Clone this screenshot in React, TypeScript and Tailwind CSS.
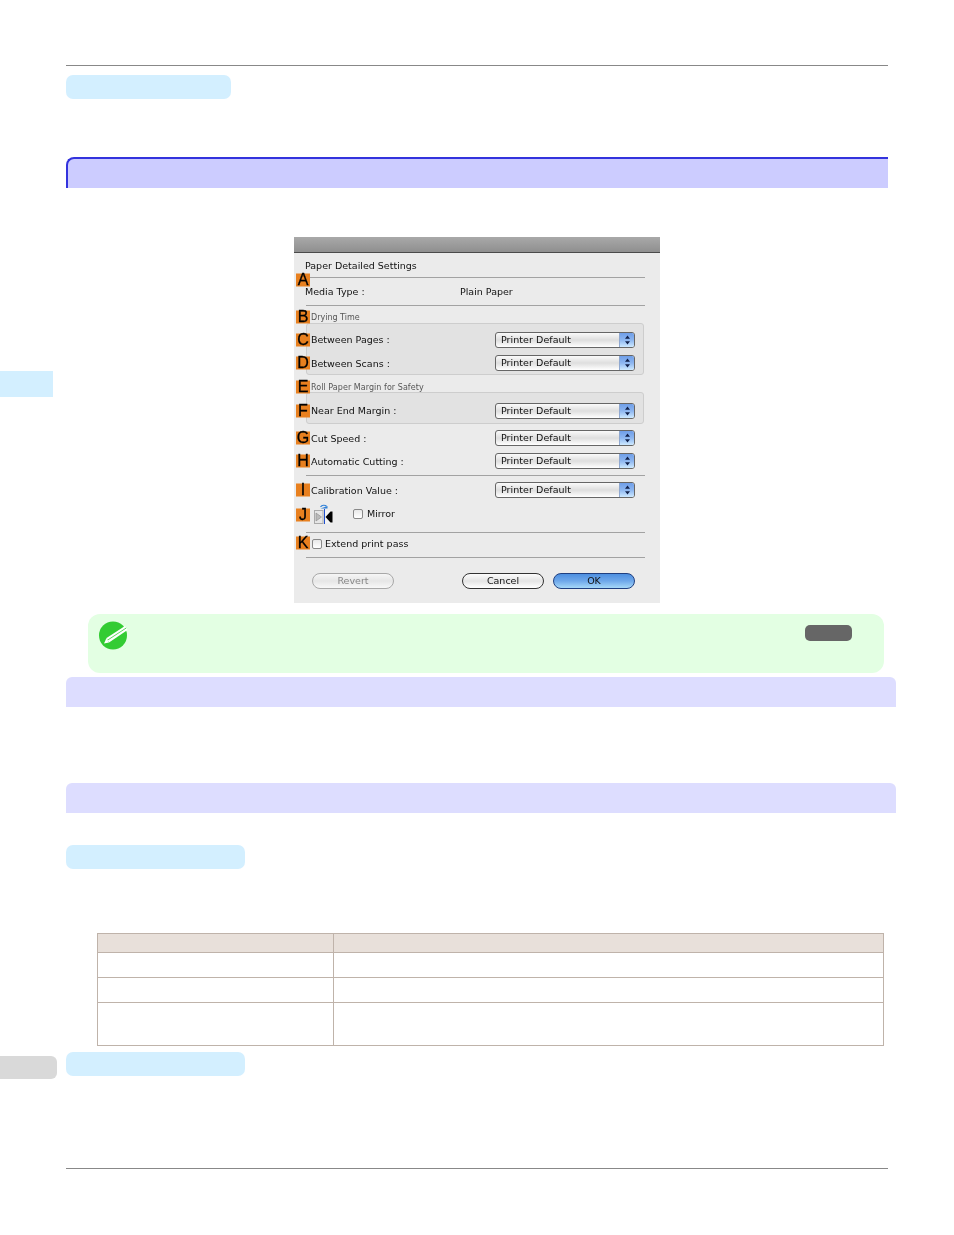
import React from "react";

const font = { fontFamily: '"DejaVu Sans", sans-serif' };

function Badge({ l, cls }: { l: string; cls: string }) {
  return (
    <span
      className={`absolute top-1/2 -translate-y-1/2 w-[14px] h-[13px] bg-[#e8801f] text-black text-[16px] leading-[12px] text-center [-webkit-text-stroke:0.3px_black] font-['Liberation_Sans',sans-serif] ${cls}`}
    >
      {l}
    </span>
  );
}

function Select() {
  return (
    <div className="w-[140px] h-[16px] flex rounded-[3px] border border-[#666] overflow-hidden bg-gradient-to-b from-[#fafafa] via-[#dedede] to-white shrink-0">
      <span className="flex-1 pl-[5px] text-[9.5px] leading-[14px] text-[#111] tracking-[0.05px]">Printer Default</span>
      <span className="w-[15px] flex items-center justify-center bg-gradient-to-b from-[#6f9ee8] via-[#8db6f0] to-[#cfeaff] border-l border-[#8fa8d0]">
        <svg width="7" height="10" viewBox="0 0 7 10">
          <path d="M3.5 0.5 L6 3.8 H1 Z M3.5 9.5 L6 6.2 H1 Z" fill="#10204a" />
        </svg>
      </span>
    </div>
  );
}

function SelectRow({ l, label, badgeCls, className, labelCls = "" }: { l: string; label: string; badgeCls: string; className: string; labelCls?: string }) {
  return (
    <div className={`relative flex items-center justify-between h-[16px] ${className}`}>
      <Badge l={l} cls={badgeCls} />
      <span className={`text-[9.5px] text-[#111] whitespace-nowrap ${labelCls}`}>{label}</span>
      <Select />
    </div>
  );
}

function Line() {
  return <div className="h-px bg-[#a2a2a2]" />;
}

function Check() {
  return <span className="block w-[10px] h-[10px] rounded-[2px] border border-[#888] bg-gradient-to-b from-[#e8e8e8] to-white shrink-0" />;
}

function Dialog() {
  return (
    <div style={font} className="ml-[294px] mt-[49px] w-[366px] h-[366px] bg-[#ebebeb] blur-[0.35px]">
      <div className="h-[16px] bg-gradient-to-b from-[#a9a9a9] to-[#8f8f8f] border-b border-[#4a4a4a]" />
      <div className="ml-[12px] w-[339px]">
        <div className="h-[24px] flex items-center pt-[2px] -ml-px text-[9.5px] text-[#111]">Paper Detailed Settings</div>
        <Line />
        <div className="relative h-[27px] flex items-center pt-[2px] -ml-px text-[9.5px] text-[#111]">
          <Badge l="A" cls="left-[-9px] top-[2px]" />
          <span className="w-[155px]">Media Type :</span>
          <span>Plain Paper</span>
        </div>
        <Line />
        <div className="relative mt-[4px] h-[13px] flex items-center pl-[5px] pt-[3px] text-[8px] text-[#555]">
          <Badge l="B" cls="left-[-10px]" />
          <span>Drying Time</span>
        </div>
        <div className="w-[338px] h-[52px] rounded-[3px] border border-[#cdcdcd] bg-[#e2e2e2] pt-[8px] pl-[4px] pr-[8px] flex flex-col gap-[7px]">
          <SelectRow l="C" label="Between Pages :" badgeCls="left-[-15px]" className="" />
          <SelectRow l="D" label="Between Scans :" badgeCls="left-[-15px]" className="" labelCls="pt-[2px]" />
        </div>
        <div className="relative mt-[6px] h-[11px] flex items-center pl-[5px] pt-[2px] text-[8px] text-[#555] tracking-[0.05px]">
          <Badge l="E" cls="left-[-10px]" />
          <span>Roll Paper Margin for Safety</span>
        </div>
        <div className="w-[338px] h-[32px] rounded-[3px] border border-[#cdcdcd] bg-[#e2e2e2] pt-[10px] pl-[4px] pr-[8px]">
          <SelectRow l="F" label="Near End Margin :" badgeCls="left-[-15px]" className="" />
        </div>
        <SelectRow l="G" label="Cut Speed :" badgeCls="left-[-10px]" className="mt-[6px] pl-[5px] pr-[10px]" labelCls="pt-[2px]" />
        <SelectRow l="H" label="Automatic Cutting :" badgeCls="left-[-10px]" className="mt-[7px] pl-[5px] pr-[10px]" labelCls="pt-[2px]" />
        <div className="mt-[6px]"><Line /></div>
        <SelectRow l="I" label="Calibration Value :" badgeCls="left-[-10px]" className="mt-[6px] pl-[5px] pr-[10px]" labelCls="pt-[2px]" />
        <div className="relative mt-[6px] h-[20px] flex items-center pl-[8px]">
          <Badge l="J" cls="left-[-10px] top-[11px]" />
          <svg width="19" height="20" viewBox="0 0 19 20" className="shrink-0">
            <path d="M6.5 3 C8 0.8 11 0.8 12.5 2.2" fill="none" stroke="#2f80d8" strokeWidth="1.2" />
            <path d="M6.5 4.5 H13.5 V2 Z" fill="#2f80d8" />
            <rect x="0.5" y="6.5" width="8.5" height="13" fill="#e6e6e6" stroke="#aaa" />
            <path d="M2 9 L7.5 13 L2 17 Z" fill="#bbb" stroke="#888" strokeWidth="0.6" />
            <rect x="10" y="5" width="1" height="15" fill="#2050d0" />
            <rect x="11" y="6.5" width="7.5" height="13" fill="#f4f4f4" />
            <path d="M18.5 7.5 V18.5 H16.5 L11.5 13 L16.5 7.5 Z" fill="#000" />
          </svg>
          <span className="ml-[20px]"><Check /></span>
          <span className="ml-[4px] text-[9.5px] text-[#111]">Mirror</span>
        </div>
        <div className="mt-[8px]"><Line /></div>
        <div className="relative h-[24px] flex items-center pl-[6px] pb-[2px]">
          <Badge l="K" cls="left-[-10px] top-[10px]" />
          <Check />
          <span className="ml-[3px] text-[9.5px] text-[#111]">Extend print pass</span>
        </div>
        <Line />
        <div className="mt-[15px] flex items-center pl-[6px] pr-[10px] text-[9.5px]">
          <span className="w-[82px] h-[16px] rounded-full border border-[#a8a8a8] bg-gradient-to-b from-[#f6f6f6] via-[#e6e6e6] to-[#f8f8f8] text-[#888] text-center leading-[14px]">Revert</span>
          <span className="ml-[68px] w-[82px] h-[16px] rounded-full border border-[#333] bg-gradient-to-b from-[#fdfdfd] via-[#e4e4e4] to-white text-[#111] text-center leading-[14px]">Cancel</span>
          <span className="ml-[9px] w-[82px] h-[16px] rounded-full border border-[#1f3f80] bg-gradient-to-b from-[#4d8fe0] via-[#6fa8ea] to-[#a6d8f8] text-[#111] text-center leading-[14px]">OK</span>
        </div>
      </div>
    </div>
  );
}

function NoteIcon() {
  return (
    <svg width="32" height="30" viewBox="0 0 32 30" className="block">
      <circle cx="15" cy="15.5" r="14" fill="#33cc33" />
      <path d="M8.5 18 L27 6 L29.5 10 L11 22.5 Z" fill="#ffffff" />
      <path d="M9.8 20 L28.2 8" stroke="#33cc33" strokeWidth="0.8" fill="none" />
      <path d="M8.5 18 L6 23.5 L11 22.5 Z" fill="#fff" />
    </svg>
  );
}

export default function App() {
  return (
    <div className="relative w-[954px] h-[1235px] bg-white overflow-hidden pt-[65px]">
      <div className="absolute left-0 top-[371px] w-[53px] h-[26px] bg-[#d3efff]" />
      <div className="absolute left-0 top-[1056px] w-[57px] h-[23px] bg-[#d9d9d9] rounded-r-md" />

      <div className="ml-[66px] w-[822px] h-px bg-[#888]" />
      <div className="ml-[66px] mt-[9px] w-[165px] h-[24px] rounded-[7px] bg-[#d3efff]" />
      <div className="ml-[66px] mt-[58px] w-[822px] h-[31px] bg-[#ccccff] border-t-2 border-l-2 border-[#3333dd] rounded-tl-[8px]" />

      <Dialog />

      <div className="relative ml-[88px] mt-[11px] w-[796px] h-[59px] rounded-[12px] bg-[#e3ffe3]">
        <div className="absolute left-[10px] top-[6px]"><NoteIcon /></div>
        <div className="absolute left-[717px] top-[11px] w-[47px] h-[16px] rounded-[5px] bg-[#666]" />
      </div>

      <div className="ml-[66px] mt-[4px] w-[830px] h-[30px] rounded-t-[6px] bg-[#ddddff]" />
      <div className="ml-[66px] mt-[76px] w-[830px] h-[30px] rounded-t-[6px] bg-[#ddddff]" />
      <div className="ml-[66px] mt-[32px] w-[179px] h-[24px] rounded-[7px] bg-[#d3efff]" />

      <table className="ml-[97px] mt-[64px] w-[787px] table-fixed border-collapse">
        <colgroup>
          <col className="w-[236px]" />
          <col />
        </colgroup>
        <tbody>
          <tr className="h-[19px] bg-[#e8e0da]">
            <td className="border border-[#bfb3aa] p-0" />
            <td className="border border-[#bfb3aa] p-0" />
          </tr>
          <tr className="h-[25px]">
            <td className="border border-[#bfb3aa] p-0" />
            <td className="border border-[#bfb3aa] p-0" />
          </tr>
          <tr className="h-[25px]">
            <td className="border border-[#bfb3aa] p-0" />
            <td className="border border-[#bfb3aa] p-0" />
          </tr>
          <tr className="h-[43px]">
            <td className="border border-[#bfb3aa] p-0" />
            <td className="border border-[#bfb3aa] p-0" />
          </tr>
        </tbody>
      </table>

      <div className="ml-[66px] mt-[6px] w-[179px] h-[24px] rounded-[7px] bg-[#d3efff]" />
      <div className="ml-[66px] mt-[92px] w-[822px] h-px bg-[#888]" />
    </div>
  );
}
